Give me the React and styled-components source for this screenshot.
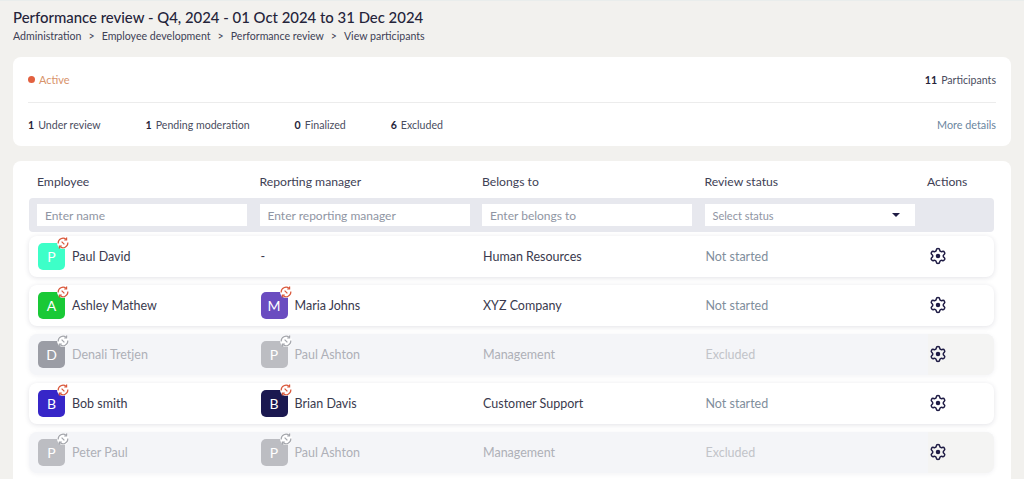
import React from "react";
import styled, { createGlobalStyle } from "styled-components";

const employees = [
  {
    name: "Paul David",
    color: "#3dffc8",
    manager: null,
    belongs: "Human Resources",
    status: "Not started",
  },
  {
    name: "Ashley Mathew",
    color: "#19c936",
    manager: { name: "Maria Johns", color: "#6a4cc0" },
    belongs: "XYZ Company",
    status: "Not started",
  },
  {
    name: "Denali Tretjen",
    color: "#9b9da5",
    manager: { name: "Paul Ashton", color: "#bcbdc2" },
    belongs: "Management",
    status: "Excluded",
    excluded: true,
  },
  {
    name: "Bob smith",
    color: "#3726c8",
    manager: { name: "Brian Davis", color: "#1b1850" },
    belongs: "Customer Support",
    status: "Not started",
  },
  {
    name: "Peter Paul",
    color: "#bcbdc2",
    manager: { name: "Paul Ashton", color: "#bcbdc2" },
    belongs: "Management",
    status: "Excluded",
    excluded: true,
  },
];

const columns = ["Employee", "Reporting manager", "Belongs to", "Review status", "Actions"];
const filters = ["Enter name", "Enter reporting manager", "Enter belongs to"];

const SyncOffIcon = ({ muted }) => {
  const stroke = muted ? "#a4a6ac" : "#d9573a";
  return (
    <svg width="12" height="12" viewBox="0 0 12 12" fill="none" stroke={stroke} strokeWidth="1.2">
      <circle cx="6" cy="6" r="6" fill="#fff" stroke="none" />
      <path d="M1.200 6.500a4.800 4.800 0 0 1 8-4" />
      <path d="M10.800 5.500a4.800 4.800 0 0 1-8 4" />
      <path d="M9.600 .6v2.400H7.200M2.400 11.400V9h2.400" />
      <path d="M4.600 4.600l2.800 2.800" />
    </svg>
  );
};

const GearIcon = () => (
  <svg width="18" height="18" viewBox="0 0 24 24" fill="none" stroke="#1f1c45" strokeWidth="2" strokeLinejoin="round">
    <path d="M9.671 4.136a2.34 2.34 0 0 1 4.659 0 2.34 2.34 0 0 0 3.319 1.915 2.34 2.34 0 0 1 2.33 4.033 2.34 2.34 0 0 0 0 3.831 2.34 2.34 0 0 1-2.33 4.033 2.34 2.34 0 0 0-3.319 1.915 2.34 2.34 0 0 1-4.659 0 2.34 2.34 0 0 0-3.32-1.915 2.34 2.34 0 0 1-2.33-4.033 2.34 2.34 0 0 0 0-3.831A2.34 2.34 0 0 1 6.35 6.051a2.34 2.34 0 0 0 3.319-1.915" />
    <circle cx="12" cy="12" r="3" fill="#1f1c45" stroke="none" />
  </svg>
);

const Person = ({ name, color, excluded }) => (
  <PersonWrap>
    <Avatar $color={color}>
      {name[0]}
      <AvatarBadge>
        <SyncOffIcon muted={excluded} />
      </AvatarBadge>
    </Avatar>
    <CellText $excluded={excluded}>{name}</CellText>
  </PersonWrap>
);

export default function App() {
  return (
    <Page>
      <GlobalStyle />
      <Title>Performance review - Q4, 2024 - 01 Oct 2024 to 31 Dec 2024</Title>
      <Breadcrumb>
        <span>Administration</span>
        <Sep>&gt;</Sep>
        <span>Employee development</span>
        <Sep>&gt;</Sep>
        <span>Performance review</span>
        <Sep>&gt;</Sep>
        <span>View participants</span>
      </Breadcrumb>

      <SummaryCard>
        <SummaryTop>
          <ActiveLabel>
            <Dot />
            Active
          </ActiveLabel>
          <Stat>
            <b>11</b>Participants
          </Stat>
        </SummaryTop>
        <SummaryBottom>
          <Stats>
            <Stat>
              <b>1</b>Under review
            </Stat>
            <Stat>
              <b>1</b>Pending moderation
            </Stat>
            <Stat>
              <b>0</b>Finalized
            </Stat>
            <Stat>
              <b>6</b>Excluded
            </Stat>
          </Stats>
          <MoreLink>More details</MoreLink>
        </SummaryBottom>
      </SummaryCard>

      <TableCard>
        <HeaderRow>
          {columns.map((col) => (
            <HeaderCell key={col}>{col}</HeaderCell>
          ))}
        </HeaderRow>
        <FilterRow>
          {filters.map((text) => (
            <FilterInput key={text} placeholder={text} />
          ))}
          <SelectBox>
            Select status
            <Caret />
          </SelectBox>
        </FilterRow>
        {employees.map((emp) => (
          <Row key={emp.name} $excluded={emp.excluded}>
            <Person name={emp.name} color={emp.color} excluded={emp.excluded} />
            {emp.manager ? (
              <Person name={emp.manager.name} color={emp.manager.color} excluded={emp.excluded} />
            ) : (
              <CellText>-</CellText>
            )}
            <CellText $excluded={emp.excluded}>{emp.belongs}</CellText>
            <StatusText $excluded={emp.excluded}>{emp.status}</StatusText>
            <ActionCell $excluded={emp.excluded}>
              <GearIcon />
            </ActionCell>
          </Row>
        ))}
      </TableCard>
    </Page>
  );
}

// Styles
const GlobalStyle = createGlobalStyle`
  html, body {
    margin: 0;
    height: 100%;
    overflow: hidden;
    background: #f2f1ee;
  }
  body, input {
    font-family: Lato, "Liberation Sans", sans-serif;
  }
`;

const Page = styled.div`
  height: 479px;
  overflow: hidden;
  padding: 7px 13px 0;
  box-sizing: border-box;
  border-top: 1px solid #e9edec;
`;

const Title = styled.h1`
  margin: 0;
  font-size: 14.9px;
  line-height: 18px;
  font-weight: 500;
  color: #25243a;
`;

const Breadcrumb = styled.div`
  display: flex;
  margin-top: 3px;
  font-size: 10.6px;
  line-height: 14px;
  color: #3e4155;
`;

const Sep = styled.span`
  margin: 0 7px;
`;

const SummaryCard = styled.section`
  margin-top: 14px;
  width: 998px;
  padding: 0 15px;
  box-sizing: border-box;
  background: #fff;
  border-radius: 8px;
`;

const SummaryTop = styled.div`
  height: 45px;
  display: flex;
  align-items: center;
  justify-content: space-between;
  border-bottom: 1px solid #ececec;
`;

const SummaryBottom = styled.div`
  height: 43px;
  display: flex;
  align-items: center;
  justify-content: space-between;
`;

const ActiveLabel = styled.div`
  display: flex;
  align-items: center;
  gap: 4px;
  font-size: 11px;
  color: #d8936a;
`;

const Dot = styled.span`
  width: 7px;
  height: 7px;
  border-radius: 50%;
  background: #e2603f;
`;

const Stats = styled.div`
  display: flex;
  gap: 45px;
`;

const Stat = styled.div`
  font-size: 10.6px;
  color: #4a4d60;

  b {
    font-weight: 700;
    color: #25243a;
    margin-right: 4px;
  }
`;

const MoreLink = styled.a`
  font-size: 10.8px;
  color: #6a86a0;
`;

const TableCard = styled.section`
  margin-top: 15px;
  width: 998px;
  height: 400px;
  padding: 0 17px 0 16px;
  box-sizing: border-box;
  background: #fff;
  border-radius: 8px;
`;

const gridColumns = "repeat(4, 222.5px) 1fr";

const HeaderRow = styled.div`
  display: grid;
  grid-template-columns: ${gridColumns};
  height: 37px;
  padding: 3px 0 0 8px;
  box-sizing: border-box;
  align-items: center;
`;

const HeaderCell = styled.div`
  font-size: 12.2px;
  color: #3e4155;
`;

const FilterRow = styled.div`
  display: grid;
  grid-template-columns: ${gridColumns};
  height: 34px;
  padding-left: 8px;
  align-items: center;
  background: #e7e8ee;
  border-radius: 4px;
`;

const FilterInput = styled.input`
  width: 210px;
  height: 22px;
  padding: 0 8px;
  box-sizing: border-box;
  border: 0;
  outline: 0;
  font-size: 12px;
  background: #fff;
  color: #3e4155;

  &::placeholder {
    color: #8f95a3;
    opacity: 1;
  }
`;

const SelectBox = styled.div`
  width: 210px;
  height: 22px;
  padding: 0 15px 0 8px;
  box-sizing: border-box;
  display: flex;
  align-items: center;
  justify-content: space-between;
  font-size: 11px;
  background: #fff;
  color: #8f95a3;
`;

const Caret = styled.span`
  width: 0;
  height: 0;
  border-left: 4px solid transparent;
  border-right: 4px solid transparent;
  border-top: 4px solid #1f1c45;
`;

const Row = styled.div`
  display: grid;
  grid-template-columns: ${gridColumns};
  height: 41px;
  margin-top: 4px;
  margin-bottom: 8px;
  padding-left: 9px;
  align-items: center;
  border-radius: 8px;
  background: ${(props) => (props.$excluded ? "#f4f5f8" : "#fff")};
  box-shadow: 0 1px 5px
    ${(props) => (props.$excluded ? "rgba(40, 40, 70, 0.06)" : "rgba(40, 40, 70, 0.13)")};
`;

const PersonWrap = styled.div`
  display: flex;
  align-items: center;
  gap: 7px;
`;

const Avatar = styled.div`
  position: relative;
  width: 27px;
  height: 27px;
  display: flex;
  align-items: center;
  justify-content: center;
  border-radius: 5px;
  font-size: 14px;
  color: #fff;
  background: ${(props) => props.$color};
`;

const AvatarBadge = styled.span`
  position: absolute;
  top: -6px;
  right: -4px;
  display: flex;
`;

const CellText = styled.div`
  font-size: 12.5px;
  color: ${(props) => (props.$excluded ? "#aeb0b7" : "#3a3a4e")};
`;

const StatusText = styled.div`
  font-size: 12.5px;
  color: ${(props) => (props.$excluded ? "#c2c4c9" : "#7f8e9c")};
`;

const ActionCell = styled.div`
  height: 100%;
  display: flex;
  align-items: center;
  padding: 0 0 1px 1px;
  box-sizing: border-box;
  border-radius: 0 8px 8px 0;
  background: ${(props) => (props.$excluded ? "#f4f4f3" : "transparent")};
`;
